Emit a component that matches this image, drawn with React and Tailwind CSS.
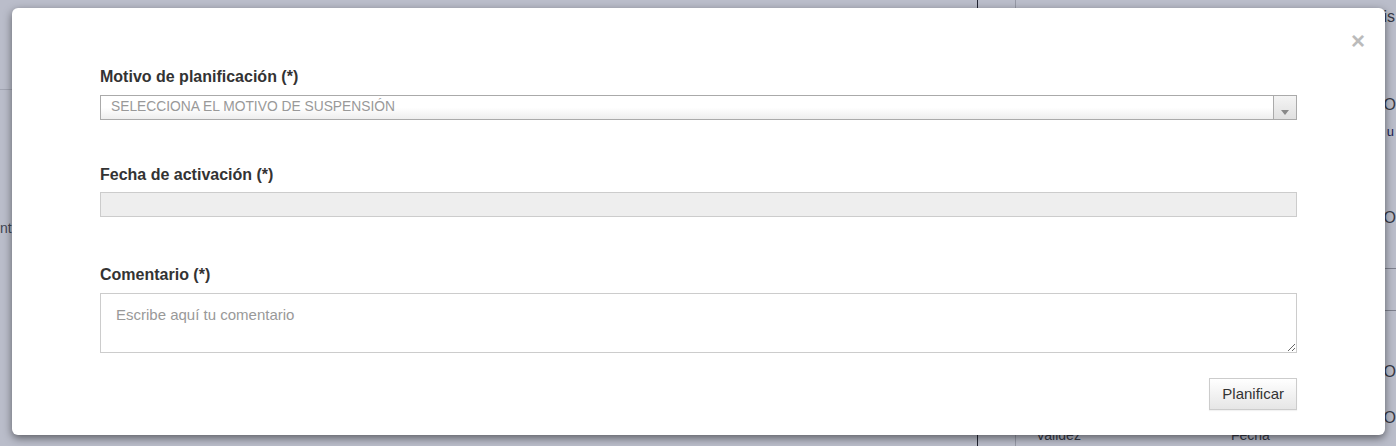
import React from 'react';

export default function App() {
  const labelCls = "block text-[16px] font-bold text-[#333] leading-[18px]";

  return (
    <div className="relative h-[446px] w-full overflow-hidden bg-white font-['Liberation_Sans',Arial,sans-serif]">
      {/* page behind the backdrop */}
      <div className="flex h-full">
        <div className="w-[978px] shrink-0 border-r border-[#222] flex flex-col">
          <div className="h-[90px] border-b border-[#ddd]" />
          <div className="pt-[128px] text-[14px] text-[#555]">nt</div>
        </div>
        <div className="w-[38px] shrink-0 border-r border-[#ccc]" />
        <div className="flex-1 flex flex-col text-[16px] text-[#444]">
          <div className="h-[34px] flex justify-end items-start pt-[5px] pr-[1px] whitespace-nowrap">is</div>
          <div className="h-[90px] flex justify-end items-start pt-[63px] leading-[18px] whitespace-nowrap">O</div>
          <div className="h-[30px] flex justify-end items-start text-[13px] text-[#225] pr-[2px] whitespace-nowrap">u</div>
          <div className="h-[120px] flex justify-end items-start pt-[59px] leading-[18px] whitespace-nowrap">O</div>
          <div className="h-[45px] border-t border-b border-[#aaa]" />
          <div className="h-[75px] flex justify-end items-start pt-[52px] leading-[18px] whitespace-nowrap">O</div>
          <div className="h-[40px] flex justify-end items-start pt-[24px] leading-[18px] whitespace-nowrap">O</div>
          <div className="flex pl-[20px] gap-[150px] text-[14px] whitespace-nowrap">
            <span>Validez</span>
            <span>Fecha</span>
          </div>
        </div>
      </div>

      {/* backdrop */}
      <div className="absolute inset-0 bg-[#1b2550]/30" />

      {/* modal */}
      <div className="absolute left-[12px] top-[8px] w-[1373px] h-[427px] bg-white rounded-[6px] shadow-[0_3px_9px_rgba(0,0,0,0.5)] px-[88px] pt-[60px]">
        <button className="absolute right-[20px] top-[21px] text-[24px] leading-none font-bold text-[#bbb]">×</button>

        <div>
          <label className={labelCls + " mb-[9px]"}>Motivo de planificación (*)</label>
          <div className="flex h-[25px] border border-[#aaa] bg-gradient-to-b from-white from-50% to-[#eee]">
            <div className="flex-1 flex items-center pl-[10px] text-[13.8px] text-[#999] uppercase">
              Selecciona el motivo de suspensión
            </div>
            <div className="w-[23px] border-l border-[#aaa] bg-gradient-to-b from-[#f4f4f4] to-[#e0e0e0] flex items-end justify-center pb-[4px]">
              <svg width="8" height="5" viewBox="0 0 8 5">
                <path d="M0 0 L8 0 L4 5 Z" fill="#888" />
              </svg>
            </div>
          </div>
        </div>

        <div className="mt-[46px]">
          <label className={labelCls + " mb-[8px]"}>Fecha de activación (*)</label>
          <div className="h-[25px] border border-[#ccc] bg-[#eee]" />
        </div>

        <div className="mt-[49px]">
          <label className={labelCls + " mb-[9px]"}>Comentario (*)</label>
          <textarea
            className="block w-full h-[60px] border border-[#ccc] px-[15px] py-[10px] text-[15px] text-[#555] placeholder:text-[#999] outline-none"
            placeholder="Escribe aquí tu comentario"
          />
        </div>

        <div className="flex justify-end mt-[25px]">
          <button className="h-[32px] px-[12px] border border-[#ccc] bg-gradient-to-b from-white to-[#e6e6e6] text-[15px] text-[#333] shadow-[0_1px_1px_rgba(0,0,0,0.05)]">
            Planificar
          </button>
        </div>
      </div>
    </div>
  );
}
